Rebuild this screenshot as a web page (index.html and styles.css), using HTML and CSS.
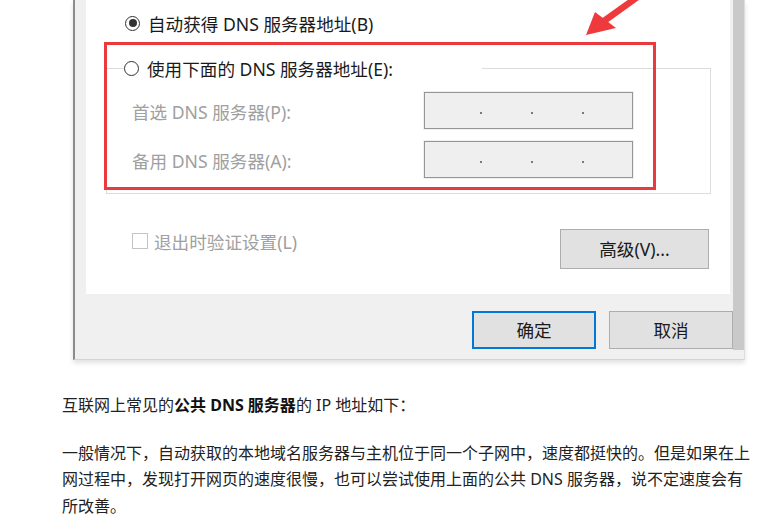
FILE: index.html
```html
<!DOCTYPE html>
<html lang="zh-CN">
<head>
<meta charset="utf-8">
<title>DNS 设置</title>
<link rel="stylesheet" href="styles.css">
</head>
<body>
<div class="article">
  <div class="shot">
    <div class="main">
      <div class="panel">
        <div class="radio-row">
          <span class="radio checked"></span>
          <span class="opt-text">自动获得 DNS 服务器地址(B)</span>
        </div>
        <div class="groupbox">
          <div class="legend">
            <span class="radio"></span>
            <span class="opt-text">使用下面的 DNS 服务器地址(E):</span>
          </div>
          <div class="field">
            <span class="field-label">首选 DNS 服务器(P):</span>
            <span class="ipbox"><i></i><i></i><i></i></span>
          </div>
          <div class="field">
            <span class="field-label">备用 DNS 服务器(A):</span>
            <span class="ipbox"><i></i><i></i><i></i></span>
          </div>
        </div>
        <div class="bottom-row">
          <span class="check"><span class="box"></span><span>退出时验证设置(L)</span></span>
          <span class="btn adv">高级(V)...</span>
        </div>
      </div>
      <div class="actions">
        <span class="btn ok">确定</span>
        <span class="btn">取消</span>
      </div>
    </div>
    <div class="band"></div>
    <div class="highlight"></div>
    <svg class="arrow" width="90" height="45" viewBox="0 0 90 45">
      <line x1="34" y1="21" x2="80" y2="-12" stroke="#ee3a3c" stroke-width="6.5"/>
      <polygon points="16,35 25,12 46,28" fill="#ee3a3c"/>
    </svg>
  </div>
  <p class="p1">互联网上常见的<strong>公共 DNS 服务器</strong>的 IP 地址如下：</p>
  <p class="p2">一般情况下，自动获取的本地域名服务器与主机位于同一个子网中，速度都挺快的。但是如果在上网过程中，发现打开网页的速度很慢，也可以尝试使用上面的公共 DNS 服务器，说不定速度会有所改善。</p>
</div>
</body>
</html>
```

FILE: styles.css
```css
html, body {
  margin: 0;
  background: #fff;
}

body {
  font-family: "Noto Sans", "Noto Sans CJK SC", sans-serif;
  overflow: hidden;
}

.article {
  padding-left: 62px;
  width: 692px;
}

/* dialog screenshot */
.shot {
  position: relative;
  margin-left: 11px;
  width: 672px;
  height: 360px;
  box-sizing: border-box;
  display: flex;
  align-items: flex-start;
  background: #f0f0f0;
  border-left: 2px solid #8c8c8c;
  border-right: 1px solid #dedede;
  border-bottom: 1px solid #d4d4d4;
  box-shadow: 0 3px 5px rgba(0, 0, 0, 0.12);
  padding-left: 11px;
}

.main {
  width: 647px;
}

.panel {
  background: #fff;
  width: 644px;
  height: 294px;
  box-sizing: border-box;
  padding: 11px 0 0 20px;
}

.radio-row {
  display: flex;
  align-items: center;
  height: 24px;
  padding-left: 19px;
}

.radio {
  width: 15px;
  height: 15px;
  box-sizing: border-box;
  border: 1px solid #333;
  border-radius: 50%;
  background: #fff;
  display: flex;
  align-items: center;
  justify-content: center;
  flex: none;
}

.radio.checked::after {
  content: "";
  width: 8px;
  height: 8px;
  border-radius: 50%;
  background: #333;
}

.opt-text {
  margin-left: 8px;
  font-size: 17.6px;
  color: #1a1a1a;
  white-space: nowrap;
}

.groupbox {
  margin-top: 33px;
  width: 605px;
  height: 126px;
  box-sizing: border-box;
  border: 1px solid #dcdcdc;
}

.legend {
  display: flex;
  align-items: center;
  height: 24px;
  margin-top: -13px;
  margin-left: 17px;
  width: 358px;
  background: #fff;
}

.field {
  display: grid;
  grid-template-columns: 292px 209px;
  align-items: center;
  height: 37px;
  padding-left: 25px;
  margin-top: 12px;
}

.field + .field {
  margin-top: 12px;
}

.field-label {
  font-size: 17.6px;
  color: #a0a0a0;
  white-space: nowrap;
  padding-top: 1px;
}

.ipbox {
  height: 37px;
  box-sizing: border-box;
  border: 1px solid #959595;
  box-shadow: 0 0 0 1px rgba(0, 0, 0, 0.06);
  background: #efefef;
  display: flex;
  align-items: center;
  padding-left: 55px;
  gap: 49px;
}

.ipbox i {
  width: 2px;
  height: 2px;
  margin-top: 4px;
  background: #7a7a7a;
}

.bottom-row {
  display: flex;
  justify-content: space-between;
  align-items: flex-start;
  width: 603px;
  box-sizing: border-box;
  margin-top: 35px;
  padding-left: 26px;
}

.check {
  display: flex;
  align-items: center;
  gap: 6px;
  height: 24px;
  font-size: 17.6px;
  color: #a0a0a0;
}

.box {
  width: 16px;
  height: 16px;
  box-sizing: border-box;
  border: 1px solid #c4c4c4;
  background: #fff;
}

.btn {
  display: flex;
  align-items: center;
  justify-content: center;
  box-sizing: border-box;
  background: #e1e1e1;
  border: 1px solid #adadad;
  font-size: 17.6px;
  color: #1a1a1a;
  padding-bottom: 2px;
}

.btn.adv {
  width: 149px;
  height: 40px;
}

.actions {
  display: flex;
  justify-content: flex-end;
  gap: 13px;
  margin-top: 17px;
}

.actions .btn {
  width: 124px;
  height: 38px;
}

.btn.ok {
  border: 2px solid #0078d7;
}

.band {
  width: 11px;
  height: 350px;
  background: #c9c9c9;
}

/* annotation overlays */
.highlight {
  position: absolute;
  left: 29px;
  top: 42px;
  width: 552px;
  height: 148px;
  box-sizing: border-box;
  border: 3px solid #ea3a3e;
}

.arrow {
  position: absolute;
  left: 495px;
  top: 0;
  overflow: visible;
}

/* article text */
.article p {
  margin: 0;
  font-size: 16px;
  line-height: 26.5px;
  color: #222;
}

.article .p1 {
  margin-top: 32px;
}

.article .p2 {
  margin-top: 21px;
}

.article strong {
  font-weight: 700;
  color: #111;
}
```
